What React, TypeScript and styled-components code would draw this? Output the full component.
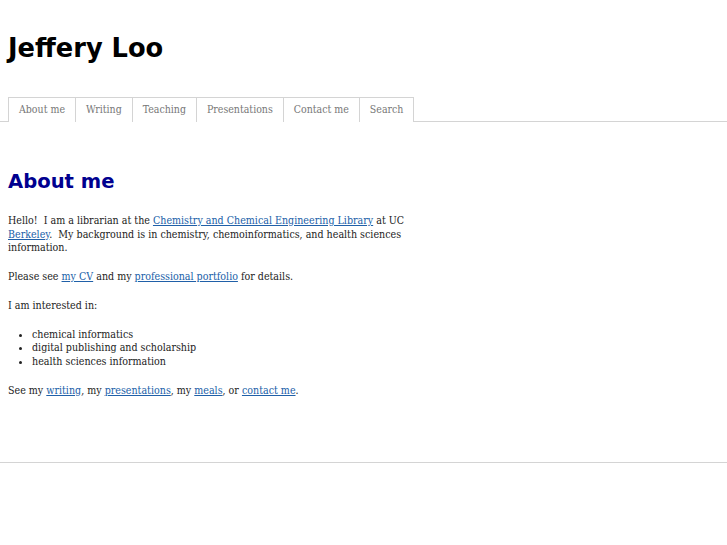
import React from "react";
import styled, { createGlobalStyle } from "styled-components";

const Global = createGlobalStyle`
  html, body { margin: 0; padding: 0; background: #fff; }
  body { font-family: "DejaVu Serif Condensed", "DejaVu Serif", serif; font-stretch: condensed; color: #222; }
`;

const Header = styled.header`
  padding: 33px 8px 0 8px;
`;

const SiteTitle = styled.h1`
  margin: 0;
  font-family: "DejaVu Sans", sans-serif;
  font-stretch: normal;
  font-weight: bold;
  font-size: 25.7px;
  line-height: 30px;
  color: #000;
`;

const TabBar = styled.nav`
  margin-top: 34px;
  display: flex;
  padding-left: 8px;
  border-bottom: 1px solid #d4d4d4;
`;

const Tab = styled.a<{ $active?: boolean }>`
  display: block;
  padding: 0 10px;
  height: 24px;
  line-height: 22px;
  font-size: 10.5px;
  color: #777;
  text-decoration: none;
  border: 1px solid #d4d4d4;
  border-left-width: 0;
  border-bottom: none;
  background: #fff;
  margin-bottom: -1px;
  &:first-child { border-left-width: 1px; }
`;

const Main = styled.main`
  padding: 48px 8px 0 8px;
  width: 404px;
  font-size: 10.6px;
  line-height: 13.7px;
  color: #222;
`;

const Heading = styled.h2`
  margin: 0 0 20px 0;
  font-family: "DejaVu Sans", sans-serif;
  font-stretch: normal;
  font-weight: bold;
  font-size: 19.6px;
  line-height: 24px;
  color: #00008f;
`;

const P = styled.p`
  margin: 0 0 15px 0;
`;

const Link = styled.a`
  color: #2060a8;
  text-decoration: underline;
`;

const List = styled.ul`
  margin: 0 0 15px 0;
  padding-left: 24px;
`;

const Footer = styled.footer`
  margin-top: 65px;
  border-top: 1px solid #d4d4d4;
  box-shadow: 0 1px 0 #f0f0f0;
`;

export default function App() {
  const tabs = ["About me", "Writing", "Teaching", "Presentations", "Contact me", "Search"];
  return (
    <>
      <Global />
      <Header>
        <SiteTitle>Jeffery Loo</SiteTitle>
      </Header>
      <TabBar>
        {tabs.map((t, i) => (
          <Tab key={t} href="#" $active={i === 0}>{t}</Tab>
        ))}
      </TabBar>
      <Main>
        <Heading>About me</Heading>
        <P>
          Hello!&nbsp; I am a librarian at the <Link href="#">Chemistry and Chemical Engineering Library</Link> at UC <Link href="#">Berkeley</Link>.&nbsp; My background is in chemistry, chemoinformatics, and health sciences information.
        </P>
        <P>
          Please see <Link href="#">my CV</Link> and my <Link href="#">professional portfolio</Link> for details.
        </P>
        <P>I am interested in:</P>
        <List>
          <li>chemical informatics</li>
          <li>digital publishing and scholarship</li>
          <li>health sciences information</li>
        </List>
        <P>
          See my <Link href="#">writing</Link>, my <Link href="#">presentations</Link>, my <Link href="#">meals</Link>, or <Link href="#">contact me</Link>.
        </P>
      </Main>
      <Footer />
    </>
  );
}
